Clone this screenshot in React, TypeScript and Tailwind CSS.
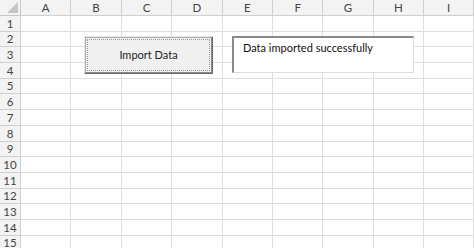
import React from "react";

const cols = ["A", "B", "C", "D", "E", "F", "G", "H", "I"];
const rows = Array.from({ length: 15 }, (_, i) => i + 1);

export default function App() {
  return (
    <div
      className="relative w-[474px] h-[248px] overflow-hidden bg-white"
      style={{ fontFamily: "Lato, 'Liberation Sans', Arial, sans-serif" }}
    >
      <div className="grid grid-cols-[21px_repeat(8,50.4px)_1fr] grid-rows-[16px_repeat(15,15.7px)]">
        <div className="relative bg-[#f3f3f3] border-r border-b border-[#c8c8c8]">
          <div className="absolute right-[2px] bottom-[2px] w-0 h-0 border-l-[11px] border-l-transparent border-b-[11px] border-b-[#c4c4c4]" />
        </div>
        {cols.map((c) => (
          <div
            key={c}
            className="flex items-center justify-center bg-[#f3f3f3] border-r border-b border-[#cfcfcf] text-[11.5px] text-[#444]"
          >
            {c}
          </div>
        ))}
        {rows.map((r) => (
          <React.Fragment key={r}>
            <div className="flex items-center justify-center bg-[#f3f3f3] border-r border-b border-[#cfcfcf] text-[11.5px] text-[#444]">
              {r}
            </div>
            {cols.map((c) => (
              <div key={c} className="border-r border-b border-[#dedede]" />
            ))}
          </React.Fragment>
        ))}
      </div>

      {/* Button */}
      <div className="absolute left-[84px] top-[36px] w-[129px] h-[38px] bg-[#f0f0f0] border border-t-[#e8e8e8] border-l-[#e8e8e8] border-r-[#6a6a6a] border-b-[#6a6a6a]">
        <div className="w-full h-full border border-t-[#a8a8a8] border-l-[#a8a8a8] border-r-[#8a8a8a] border-b-[#8a8a8a] p-[1px]">
          <div className="w-full h-full border border-dotted border-[#9a9a9a] flex items-center justify-center text-[11px] text-[#222]">
            Import Data
          </div>
        </div>
      </div>

      {/* Text box */}
      <div className="absolute left-[232px] top-[36px] w-[182px] h-[37px] bg-white border-t-2 border-l-2 border-t-[#8a8a8a] border-l-[#8a8a8a] border-r border-b border-r-[#dcdcdc] border-b-[#dcdcdc] pl-[9px] pt-[2px] text-[11px] text-[#111]">
        Data imported successfully
      </div>
    </div>
  );
}
